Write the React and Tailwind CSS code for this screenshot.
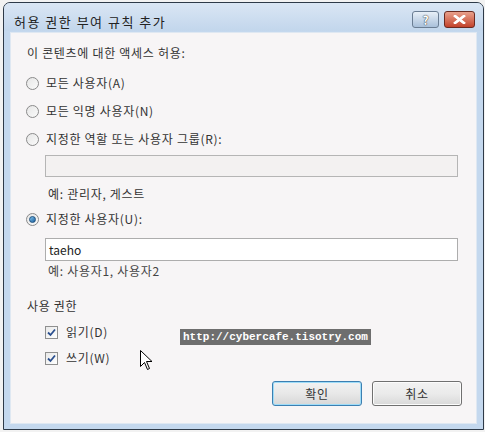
import React from "react";

const font = { fontFamily: '"Noto Sans CJK KR", "Noto Sans", sans-serif' };

const Radio = ({ checked }) => (
  <span className="relative flex items-center justify-center w-[13px] h-[13px] rounded-full border border-[#8a8a8a] bg-gradient-to-br from-[#e6e6e6] to-[#fafafa] shrink-0">
    {checked && (
      <span className="w-[7px] h-[7px] rounded-full bg-gradient-to-br from-[#7fc4ee] to-[#1b5f9e] border border-[#1c4f7d]" />
    )}
  </span>
);

const Check = () => (
  <span className="flex items-center justify-center w-[13px] h-[13px] border border-[#8f8f8f] bg-gradient-to-br from-[#e9e9e9] to-[#ffffff] shrink-0">
    <svg width="9" height="9" viewBox="0 0 9 9">
      <path d="M1 4.5 L3.5 7 L8 1.5" fill="none" stroke="#2b4f8f" strokeWidth="1.8" />
    </svg>
  </span>
);

const Cursor = () => (
  <svg width="13" height="21" viewBox="0 0 13 21">
    <path
      d="M0.5 0.5 L0.5 16.5 L4.5 12.5 L7.5 19.5 L9.5 18.5 L6.5 11.5 L12 11.5 Z"
      fill="#fff"
      stroke="#000"
      strokeWidth="1"
    />
  </svg>
);

export default function App() {
  return (
    <div className="w-[485px] h-[432px] bg-[#f2f2f2] overflow-hidden text-[#333]" style={font}>
      <div className="ml-[3px] mt-[2px] w-[481px] h-[428px] border border-[#2e3a48] rounded-t-[7px] bg-[#c4d8ee] flex flex-col">
        {/* title bar */}
        <div className="h-[28px] flex items-start justify-between bg-gradient-to-b from-[#dae6f4] to-[#c2d6ec] rounded-t-[6px]">
          <div className="pl-[10px] pt-[10px] text-[13px] leading-[18px] tracking-[1.5px] text-[#222]">허용 권한 부여 규칙 추가</div>
          <div className="flex pt-[8px] pr-[8px] gap-[5px]">
            <div className="w-[27px] h-[17px] rounded-[3px] border border-[#6a7d93] bg-gradient-to-b from-[#e8f0f8] to-[#a9c0da] flex items-center justify-center text-[12px] font-bold text-white leading-none" style={{ textShadow: "0 0 1px #333, 0 0 1px #333" }}>
              ?
            </div>
            <div className="w-[31px] h-[17px] rounded-[3px] border border-[#6b2a20] bg-gradient-to-b from-[#e8a08c] to-[#c2412a] flex items-center justify-center">
              <svg width="13" height="9" viewBox="0 0 13 9">
                <path d="M2 1 L11 8 M11 1 L2 8" stroke="#fff" strokeWidth="2.6" strokeLinecap="square" />
                <path d="M2 1 L11 8 M11 1 L2 8" stroke="#fff" strokeWidth="2" />
              </svg>
            </div>
          </div>
        </div>
        {/* content */}
        <div className="mx-[6px] mt-[1px] h-[392px] bg-[#f7f5f6] border border-[#dfe8f2] flex flex-col text-[12px] leading-[16px] tracking-[0.7px]">
          <div className="pl-[16px] pt-[12px]">이 콘텐츠에 대한 액세스 허용:</div>

          <div className="flex flex-col pl-[15px] pt-[14px] gap-[12px]">
            <div className="flex items-center gap-[7px]">
              <Radio />
              <span>모든 사용자(A)</span>
            </div>
            <div className="flex items-center gap-[7px]">
              <Radio />
              <span>모든 익명 사용자(N)</span>
            </div>
            <div className="flex items-center gap-[7px]">
              <Radio />
              <span>지정한 역할 또는 사용자 그룹(R):</span>
            </div>
          </div>

          <div className="ml-[34px] mt-[8px] w-[413px] h-[22px] border border-[#b5b5b5] bg-[#f3f1f1]" />
          <div className="ml-[37px] mt-[9px]">예: 관리자, 게스트</div>

          <div className="flex items-center gap-[7px] pl-[15px] mt-[9px]">
            <Radio checked />
            <span>지정한 사용자(U):</span>
          </div>

          <div className="ml-[34px] mt-[11px] w-[413px] h-[23px] border border-[#adadad] bg-white flex items-center pl-[3px] text-[12px] text-[#222] tracking-normal">
            taeho
          </div>
          <div className="ml-[37px] mt-[2px] text-[#444]">예: 사용자1, 사용자2</div>

          <div className="pl-[16px] mt-[19px]">사용 권한</div>

          <div className="relative flex flex-col pl-[34px] mt-[10px] gap-[10px]">
            <div className="flex items-center gap-[8px]">
              <Check />
              <span>읽기(D)</span>
            </div>
            <div className="flex items-center gap-[8px]">
              <Check />
              <span>쓰기(W)</span>
            </div>
            <div
              className="absolute left-[169px] top-[5px] bg-[#6e6e6e] text-white font-bold text-[11px] leading-[16px] px-[3px] tracking-normal"
              style={{ fontFamily: '"Liberation Mono", monospace' }}
            >
              http://cybercafe.tisotry.com
            </div>
            <div className="absolute left-[129px] top-[26px]">
              <Cursor />
            </div>
          </div>

          <div className="flex justify-end gap-[10px] pr-[14px] mt-[15px]">
            <button className="w-[90px] h-[25px] rounded-[3px] border border-[#3c7fb1] bg-gradient-to-b from-[#f2f2f2] via-[#e8e8e8] to-[#d7d7d7] shadow-[inset_0_0_0_1px_#9edcf8] text-[12px]">
              확인
            </button>
            <button className="w-[90px] h-[25px] rounded-[3px] border border-[#707070] bg-gradient-to-b from-[#f2f2f2] via-[#ebebeb] to-[#d9d9d9] shadow-[inset_0_0_0_1px_#fcfcfc] text-[12px]">
              취소
            </button>
          </div>
        </div>
      </div>
    </div>
  );
}
